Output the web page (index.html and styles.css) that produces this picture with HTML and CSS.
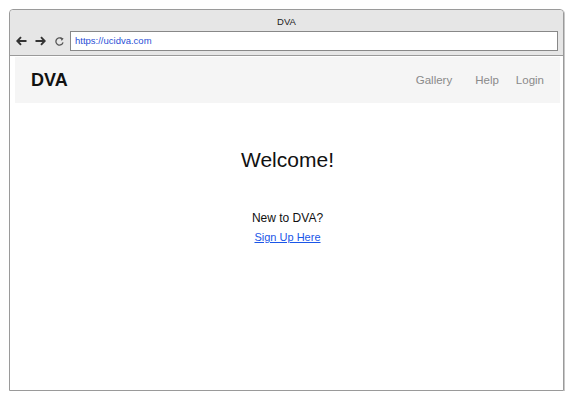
FILE: index.html
```html
<!DOCTYPE html>
<html>
<head>
<meta charset="utf-8">
<link rel="stylesheet" href="styles.css">
</head>
<body>
<div class="window">
  <div class="chrome">
    <div class="title">DVA</div>
    <div class="toolbar">
      <span class="navicons">
        <svg width="11" height="10" viewBox="0 0 11 10"><path d="M10.5 5H1.5M5 1.2L1.3 5 5 8.8" fill="none" stroke="#333" stroke-width="1.9"/></svg>
        <svg width="11" height="10" viewBox="0 0 11 10"><path d="M0.5 5h9M6 1.2L9.7 5 6 8.8" fill="none" stroke="#333" stroke-width="1.9"/></svg>
        <svg width="11" height="11" viewBox="0 0 11 11"><path d="M9 6.3A3.6 3.6 0 1 1 7.8 2.7" fill="none" stroke="#555" stroke-width="1.3"/><path d="M6.2 1L9.6 2.4 7.7 5.1z" fill="#555"/></svg>
      </span>
      <div class="address">https://ucidva.com</div>
    </div>
  </div>
  <div class="page">
    <nav class="navbar">
      <div class="brand">DVA</div>
      <div class="links">
        <a class="navlink gallery">Gallery</a>
        <a class="navlink">Help</a>
        <a class="navlink">Login</a>
      </div>
    </nav>
    <main class="content">
      <h1 class="welcome">Welcome!</h1>
      <p class="new">New to DVA?</p>
      <a class="signup" href="#">Sign Up Here</a>
    </main>
  </div>
</div>
</body>
</html>
```

FILE: styles.css
```css
html, body { margin: 0; padding: 0; background: #fff; }
body { font-family: "Liberation Sans", Arial, sans-serif; }
.window {
  margin: 9px 0 0 9px;
  width: 553px;
  height: 380px;
  border: 1px solid #9a9a9a;
  border-radius: 4px 4px 0 0;
  display: flex;
  flex-direction: column;
  box-shadow: 1px 1px 0 #c8c8c8;
}
.chrome {
  background: #e6e6e6;
  border-bottom: 1px solid #9a9a9a;
  height: 45px;
  border-radius: 4px 4px 0 0;
  display: flex;
  flex-direction: column;
}
.title {
  text-align: center;
  font-size: 9.5px;
  line-height: 11px;
  color: #222;
  padding-top: 6px;
  height: 15px;
}
.toolbar {
  display: flex;
  align-items: center;
  padding: 0 5px 0 0;
}
.navicons {
  display: flex;
  align-items: center;
  gap: 8px;
  width: 54px;
  height: 20px;
  padding-left: 6px;
}
.address {
  flex: 1;
  height: 20px;
  border: 1px solid #888;
  background: #fff;
  font-size: 9.5px;
  color: #2a4fd6;
  line-height: 18px;
  padding-left: 4px;
  box-sizing: border-box;
}
.page {
  flex: 1;
  padding: 1px 3px 0 5px;
}
.navbar {
  background: #f5f5f5;
  height: 46px;
  display: flex;
  align-items: center;
  justify-content: space-between;
  padding: 0 16px 0 16px;
}
.brand {
  font-weight: bold;
  font-size: 18px;
  color: #111;
}
.links { display: flex; gap: 17px; font-size: 11.5px; }
.navlink { color: #8a8a8a; }
.gallery { margin-right: 6px; }
.content {
  display: flex;
  flex-direction: column;
  align-items: center;
}
.welcome {
  font-weight: normal;
  font-size: 21px;
  margin: 45px 0 0;
  color: #111;
}
.new {
  font-size: 12px;
  margin: 39px 0 0;
  color: #111;
}
.signup {
  font-size: 11px;
  color: #1a56e8;
  margin-top: 6px;
}
```
